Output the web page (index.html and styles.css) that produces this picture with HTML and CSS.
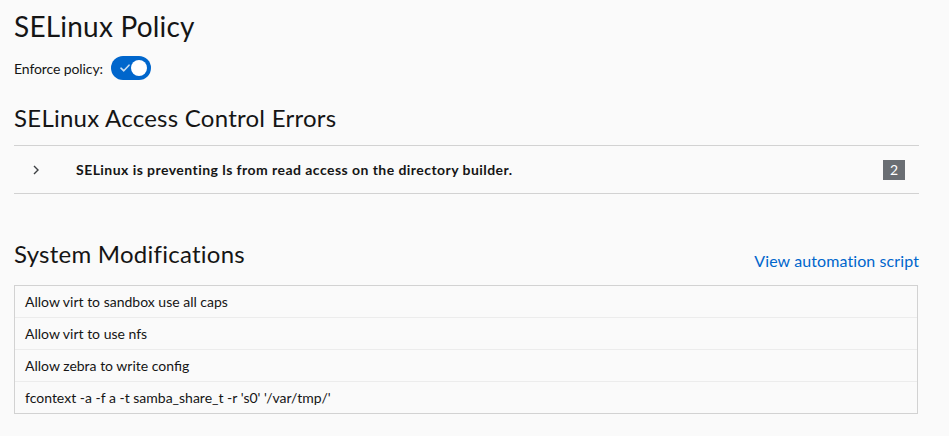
FILE: index.html
```html
<!DOCTYPE html>
<html lang="en">
<head>
<meta charset="utf-8">
<title>SELinux Policy</title>
<link rel="stylesheet" href="styles.css">
</head>
<body>
<main class="page">
  <h1 class="page-title">SELinux Policy</h1>
  <div class="enforce">
    <span class="enforce-label">Enforce policy:</span>
    <span class="switch" role="switch" aria-checked="true">
      <svg class="switch-check" viewBox="0 0 10 8" width="10" height="8" aria-hidden="true"><path d="M1 4.2 L3.8 6.8 L9 1.2" fill="none" stroke="currentColor" stroke-width="1.6" stroke-linecap="round" stroke-linejoin="round"/></svg>
      <span class="switch-knob"></span>
    </span>
  </div>

  <h2 class="section-title">SELinux Access Control Errors</h2>
  <div class="alerts">
    <div class="alert-row">
      <span class="toggle-icon">
        <svg viewBox="0 0 6 10" width="6" height="10" aria-hidden="true"><path d="M1 1 L5 5 L1 9" fill="none" stroke="currentColor" stroke-width="1.4"/></svg>
      </span>
      <span class="alert-text">SELinux is preventing ls from read access on the directory builder.</span>
      <span class="badge">2</span>
    </div>
  </div>

  <div class="mods-header">
    <h2 class="section-title">System Modifications</h2>
    <a class="link" href="#">View automation script</a>
  </div>
  <ul class="mods">
    <li>Allow virt to sandbox use all caps</li>
    <li>Allow virt to use nfs</li>
    <li>Allow zebra to write config</li>
    <li>fcontext -a -f a -t samba_share_t -r 's0' '/var/tmp/'</li>
  </ul>
</main>
</body>
</html>
```

FILE: styles.css
```css
html, body {
  margin: 0;
  padding: 0;
  background: #fafafa;
}
body {
  font-family: Lato, "Open Sans", sans-serif;
  color: #151515;
}
.page {
  padding: 8px 30px 0 14px;
}
.page-title {
  margin: 0;
  font-size: 28px;
  font-weight: 400;
  line-height: 36px;
  letter-spacing: 0.2px;
}
.enforce {
  display: flex;
  align-items: center;
  gap: 8px;
  margin-top: 12px;
  height: 24px;
}
.enforce-label {
  font-size: 14px;
  letter-spacing: -0.1px;
}
.switch {
  position: relative;
  display: inline-flex;
  align-items: center;
  width: 40px;
  height: 24px;
  border-radius: 12px;
  background: #0066cc;
}
.switch-check {
  margin-left: 9px;
  color: #c9dff3;
}
.switch-knob {
  position: absolute;
  right: 4px;
  top: 4px;
  width: 16px;
  height: 16px;
  border-radius: 50%;
  background: #fff;
}
.section-title {
  margin: 0;
  font-size: 24px;
  font-weight: 400;
  line-height: 30px;
  letter-spacing: 0.25px;
}
.enforce + .section-title {
  margin-top: 23px;
}
.alerts {
  margin-top: 12px;
  border-top: 1px solid #d2d2d2;
  border-bottom: 1px solid #d2d2d2;
}
.alert-row {
  display: flex;
  align-items: center;
  height: 47px;
}
.toggle-icon {
  display: flex;
  width: 62px;
  padding-left: 19px;
  box-sizing: border-box;
  color: #3c3f42;
}
.alert-text {
  flex: 1;
  font-size: 14px;
  font-weight: 700;
  letter-spacing: 0.45px;
}
.badge {
  margin-right: 14px;
  min-width: 22px;
  height: 20px;
  line-height: 20px;
  text-align: center;
  font-size: 14px;
  color: #fff;
  background: #6a6e73;
}
.mods-header {
  display: flex;
  justify-content: space-between;
  align-items: flex-end;
  margin-top: 45px;
}
.link {
  font-size: 16px;
  color: #0066cc;
  text-decoration: none;
  line-height: 24px;
  letter-spacing: 0.1px;
  margin-bottom: -4px;
}
.mods {
  list-style: none;
  margin: 16px 1px 0 0;
  padding: 0;
  border: 1px solid #d2d2d2;
}
.mods li {
  height: 31px;
  line-height: 31px;
  padding-left: 10px;
  font-size: 14px;
  border-top: 1px solid #ececec;
}
.mods li:first-child {
  border-top: none;
}
```
